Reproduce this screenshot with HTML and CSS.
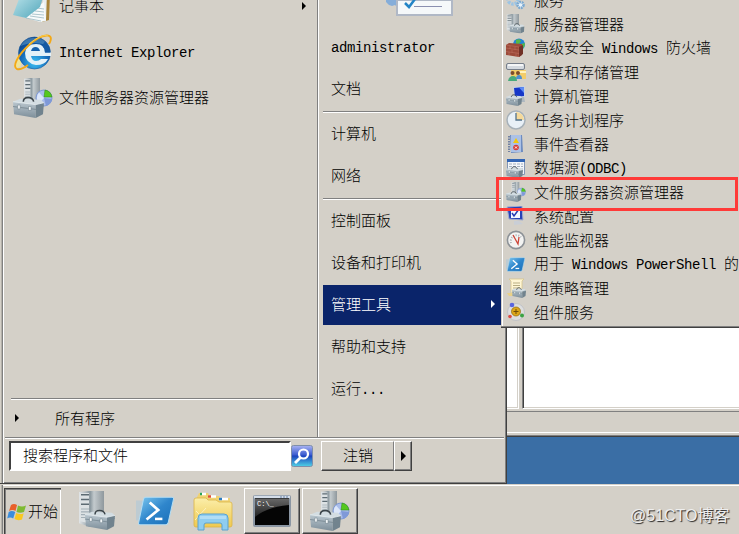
FILE: index.html
```
<!DOCTYPE html>
<html lang="zh-CN">
  <head>
    <meta charset="utf-8">
    <title>开始菜单</title>
    <link rel="stylesheet" href="styles.css">
  </head>
  <body>
    <!-- Shared icon shapes -->
    <svg class="defs" width="0" height="0">
      <defs>
        <linearGradient id="steel" x1="0" y1="0" x2="0" y2="1">
          <stop offset="0" stop-color="#b9c6ce"/><stop offset=".5" stop-color="#9cabb5"/><stop offset="1" stop-color="#7d8e99"/>
        </linearGradient>
        <linearGradient id="tower" x1="0" y1="0" x2="1" y2="0">
          <stop offset="0" stop-color="#e2e6e8"/><stop offset=".45" stop-color="#8b989f"/><stop offset=".6" stop-color="#c3cacd"/><stop offset="1" stop-color="#8f989d"/>
        </linearGradient>
        <linearGradient id="blue" x1="0" y1="0" x2="1" y2="1">
          <stop offset="0" stop-color="#7cc8f0"/><stop offset=".5" stop-color="#2f86cc"/><stop offset="1" stop-color="#1a6fb8"/>
        </linearGradient>
        <radialGradient id="globe" cx=".5" cy=".8" r=".75">
          <stop offset="0" stop-color="#3cc0f4"/><stop offset=".6" stop-color="#1468b8"/><stop offset="1" stop-color="#0b3d83"/>
        </radialGradient>
        <linearGradient id="folder" x1="0" y1="0" x2="0" y2="1">
          <stop offset="0" stop-color="#fbeeaa"/><stop offset="1" stop-color="#efc94f"/>
        </linearGradient>
        <linearGradient id="lens" x1="0" y1="0" x2="0" y2="1">
          <stop offset="0" stop-color="#a9b3f2"/><stop offset=".45" stop-color="#3a5bd0"/><stop offset=".5" stop-color="#1c43bd"/><stop offset="1" stop-color="#4fd3e6"/>
        </linearGradient>
        <linearGradient id="sheet" x1="0" y1="0" x2="1" y2="1">
          <stop offset="0" stop-color="#c5e9ef"/><stop offset="1" stop-color="#4ba3b8"/>
        </linearGradient>
        <linearGradient id="console" x1="0" y1="0" x2="0" y2="1">
          <stop offset="0" stop-color="#666"/><stop offset="1" stop-color="#222"/>
        </linearGradient>
        <symbol id="i-toolbox" viewBox="0 0 30 23" preserveAspectRatio="none">
          <path d="M0 6l7-3 20 1 3 3-7 3z" fill="#d3dde2"/>
          <path d="M0 6l22 3v14L1 19z" fill="url(#steel)"/>
          <path d="M22 9l8-2-1 12-7 4z" fill="#71838e"/>
          <path d="M0 11l22 3 8-4" fill="none" stroke="#74858f" stroke-width=".8"/>
          <path d="M0 6l22 3 8-2" fill="none" stroke="#e6edf0" stroke-width=".8"/>
          <path d="M10 6C10 0 19 0 20 6" fill="none" stroke="#3b4449" stroke-width="1.500"/>
          <path d="M4.500 9.500H7v4H4.500zM15 11h2.500v4H15z" fill="#f1f5f7" stroke="#687a84" stroke-width=".5"/>
        </symbol>
        <symbol id="i-tower" viewBox="0 0 25 38" preserveAspectRatio="none">
          <path d="M0 1l9-1h16v34l-14 4L0 34z" fill="url(#tower)"/>
          <path d="M1 2h9v32l-9-2z" fill="#dde2e4"/>
          <path d="M2 4h8M2 9h8M2 14h8" stroke="#5d6b73" stroke-width="1.600"/>
          <path d="M2 19h8M2 22h8M2 25h8M2 28h8" stroke="#a3afb6" stroke-width="1.200"/>
        </symbol>
        <symbol id="i-server" viewBox="0 0 38 40">
          <use href="#i-tower" x="0" y="0" width="25" height="36"/>
          <use href="#i-toolbox" x="6" y="18" width="30" height="21"/>
        </symbol>
        <symbol id="i-fsrm" viewBox="0 0 40 40">
          <use href="#i-tower" x="11" y="0" width="16" height="28"/>
          <circle cx="31" cy="20" r="8" fill="#a9bdea" stroke="#7f9ad4"/>
          <path d="M31 20l-5 5.500a8 8 0 0 1 0-11z" fill="#dce7fa"/>
          <path d="M31 20l2 8q5-2 6-7z" fill="#7f99d8"/>
          <path d="M31 19l1-7q6 1 7 7z" fill="#55c81e" stroke="#2a8b12" stroke-width=".5"/>
          <use href="#i-toolbox" x="0" y="18" width="31" height="22"/>
        </symbol>
        <symbol id="i-ps" viewBox="0 0 36 30">
          <path d="M0 5h8L4 24H0z" fill="#8fc3e655"/>
          <path d="M9 2h25q2 0 1.500 2l-5 22q-.5 2-2.500 2H4q-2 0-1.500-2L7 4q.5-2 2-2z" fill="url(#blue)" stroke="#b3dcf2"/>
          <path d="M13 7l8 7-11 9" fill="none" stroke="#fff" stroke-width="2.600"/>
          <path d="M18 22.500h7" stroke="#fff" stroke-width="2.400"/>
        </symbol>
      </defs>
    </svg>

    <div class="desktop">
      <!-- Window behind the menus -->
      <div class="window">
        <div class="panes">
          <div class="pane tree"></div>
          <div class="pane list"></div>
        </div>
        <div class="status"></div>
      </div>

      <!-- Start menu -->
      <div class="start-menu">
        <div class="columns">
          <div class="programs">
            <div class="program">
              <svg width="40" height="40" viewBox="0 0 40 40">
                <path d="M33 4l4 3-1 27-7 2z" fill="#a8843a"/>
                <path d="M31 4l3 2-1 29-6 1z" fill="#e8eef0"/>
                <path d="M10 31l17 5 6-2-2-18z" fill="#f7fafa"/>
                <path d="M17 30l14 2M19 28l12 1M22 25l9 1M24 22l7 1M13 32l15 3" stroke="#9bb9c2" stroke-width=".8"/>
                <path d="M9 5h23l-5 16-14 11L0 29z" fill="url(#sheet)"/>
              </svg>
              <span>记事本</span>
              <i class="arrow"></i>
            </div>
            <div class="program">
              <svg width="40" height="40" viewBox="0 0 40 40">
                <path d="M2 37C-1 26 12 12 25 5C14 17 7 27 8 34z" fill="#f4e88c" opacity=".8"/>
                <circle cx="21.500" cy="21" r="16" fill="url(#globe)" stroke="#155a9d" stroke-width=".6"/>
                <path d="M7.500 14a16 16 0 0 1 28 0q-14-6-28 0z" fill="#72b6e0" opacity=".45"/>
                <path d="M38 20.500v3.500H18q1 5 5 5 3 0 5-2h7q-3 6-12 6-11-2-11-12 1-9 11-9 9 0 9 8.500z" fill="#e4f1f8"/>
                <path d="M18 19h9q-1-4-4.500-4T18 19z" fill="#1560ab"/>
                <path d="M37 20.500a16 16 0 0 0-5-11l-3 4q3 3 3 7z" fill="#1459a3"/>
                <path d="M36 12c7-12-7-11-20 1C4 24-1 35 4 37c3 1 7-1 11-4" fill="none" stroke="#f3a817" stroke-width="1.900"/>
                <path d="M35 4c-4-2-12 2-19 8" fill="none" stroke="#fbd75b" stroke-width=".8"/>
              </svg>
              <span class="en">Internet Explorer</span>
            </div>
            <div class="program">
              <svg width="40" height="40"><use href="#i-fsrm"/></svg>
              <span>文件服务器资源管理器</span>
            </div>
            <div class="all-programs"><i class="arrow"></i><span>所有程序</span></div>
          </div>

          <div class="places">
            <div class="picture">
              <svg width="70" height="18" viewBox="0 0 70 18">
                <path d="M1 0h14v7h-3l-2-2-3 1-3-1-3-3z" fill="#85add9"/>
                <path d="M12 0h55v15H12z" fill="#f5f8fa" stroke="#b0b8c6" stroke-width="2"/>
                <path d="M20 3l4 4 6-8" fill="none" stroke="#2384c6" stroke-width="2.500"/>
                <path d="M29 6.500h28" stroke="#8a8fb0"/>
              </svg>
            </div>
            <div class="place"><span class="en">administrator</span></div>
            <div class="place">文档</div>
            <div class="sep"></div>
            <div class="place">计算机</div>
            <div class="place">网络</div>
            <div class="sep"></div>
            <div class="place">控制面板</div>
            <div class="place">设备和打印机</div>
            <div class="place active"><span>管理工具</span><i class="arrow"></i></div>
            <div class="place">帮助和支持</div>
            <div class="place">运行<span class="en">...</span></div>
          </div>
        </div>

        <div class="menu-foot">
          <div class="search">搜索程序和文件</div>
          <svg class="search-icon" width="22" height="22" viewBox="0 0 22 22">
            <rect x=".5" y=".5" width="21" height="21" rx="2" fill="url(#lens)" stroke="#7f8faa"/>
            <circle cx="12.500" cy="9" r="4.500" fill="none" stroke="#fff" stroke-width="2.200"/>
            <path d="M9.500 12.500L4 18" stroke="#fff" stroke-width="2.800"/>
          </svg>
          <div class="button logoff">注销</div>
          <div class="button more"><i class="arrow big"></i></div>
        </div>
      </div>

      <!-- Administrative tools submenu -->
      <div class="submenu">
        <div class="tool">
          <svg width="20" height="20" viewBox="0 0 20 20">
            <circle cx="7" cy="9" r="5" fill="none" stroke="#9cc4e4" stroke-width="3.500" stroke-dasharray="2.500 1"/>
            <circle cx="14.500" cy="15" r="3" fill="#e9f3fa" stroke="#7ca9d0" stroke-width="2.500" stroke-dasharray="1.800 .7"/>
          </svg>
          <span>服务</span>
        </div>
        <div class="tool">
          <svg width="20" height="20"><use href="#i-server"/></svg>
          <span>服务器管理器</span>
        </div>
        <div class="tool">
          <svg width="20" height="20" viewBox="0 0 20 20">
            <circle cx="13" cy="6.500" r="6" fill="#2384d4"/>
            <path d="M10 2q4-2 5 1l-2 3-3 1zM15 6l4-1q0 4-3 6z" fill="#53b848"/>
            <path d="M0 7l3-2 13 1v11l-3 2L0 17z" fill="#9c4a3a"/>
            <path d="M0 7l13 2v10M0 10l13 2M0 13.500l13 2M4 8v3M9 9v3M6 11.500v3M3 14v3M10 15.500v3" fill="none" stroke="#c07766" stroke-width=".5"/>
            <path d="M13 9l4-2v9l-4 3z" fill="#713127"/>
          </svg>
          <span>高级安全<span class="en"> Windows </span>防火墙</span>
        </div>
        <div class="tool">
          <svg width="20" height="20" viewBox="0 0 20 20">
            <path d="M5 8h15v9H5z" fill="#f3cd69"/>
            <path d="M13 9h7v2h-7z" fill="#fff3bd"/>
            <rect x=".5" y="1.500" width="18" height="6" rx="1.500" fill="#d5dae0" stroke="#777f8b"/>
            <path d="M2 3h15" stroke="#fff" stroke-width="1.500"/>
            <circle cx="6.500" cy="11" r="2" fill="#7d4c2c"/><circle cx="12" cy="11" r="2" fill="#7d4c2c"/>
            <path d="M2 19q1-5 5-5t4 5z" fill="#49aa7c"/><path d="M10 17q0-4 3-4t3 4z" fill="#4d8fd0"/>
          </svg>
          <span>共享和存储管理</span>
        </div>
        <div class="tool">
          <svg width="20" height="20" viewBox="0 0 20 20">
            <path d="M7 1l12-1v11l-11 1z" fill="#c8d3e2"/>
            <path d="M8 2l10-1v9L9 11z" fill="#1637c8"/><path d="M13 1.500l5-.5v6z" fill="#5f8df4"/>
            <path d="M10 12l8-1 1 5h-7z" fill="#aeb8c0"/>
            <use href="#i-toolbox" x="0" y="8" width="16" height="12"/>
          </svg>
          <span>计算机管理</span>
        </div>
        <div class="tool">
          <svg width="20" height="20" viewBox="0 0 20 20">
            <circle cx="10" cy="10" r="9" fill="#e8f0f7" stroke="#a7b1b9" stroke-width="1.500"/>
            <path d="M10 10V2a8 8 0 0 1 8 8z" fill="#f5d99a"/>
            <path d="M10 3v7h6" fill="none" stroke="#52718c" stroke-width="1.300"/>
          </svg>
          <span>任务计划程序</span>
        </div>
        <div class="tool">
          <svg width="20" height="20" viewBox="0 0 20 20">
            <path d="M4 1h12l1 17-12 1z" fill="#6e8cc0"/>
            <path d="M5 1h10v17H5z" fill="#abc1e6"/>
            <path d="M3 2v16" stroke="#7382a2" stroke-width="2" stroke-dasharray="1.500 1"/>
            <path d="M10 4l3 5H7z" fill="#f2c70c"/>
            <circle cx="10" cy="13.500" r="2.800" fill="#d83a34"/>
            <path d="M9 12.500l2 2m0-2l-2 2" stroke="#fff"/>
          </svg>
          <span>事件查看器</span>
        </div>
        <div class="tool">
          <svg width="20" height="20" viewBox="0 0 20 20">
            <path d="M1.500 1.500h17v15h-17z" fill="#f3f6fa" stroke="#8296b5"/>
            <path d="M1 1h18v3H1z" fill="#3265b4"/>
            <path d="M3 6h14M3 8.500h14M14 11h3" stroke="#a2aebe" stroke-dasharray="3 1"/>
            <use href="#i-toolbox" x="0" y="8" width="17" height="12"/>
          </svg>
          <span>数据源<span class="en">(ODBC)</span></span>
        </div>
        <div class="tool">
          <svg width="20" height="20"><use href="#i-fsrm"/></svg>
          <span>文件服务器资源管理器</span>
        </div>
        <div class="tool">
          <svg width="20" height="20" viewBox="0 0 20 20">
            <path d="M1 1l15-1 1 14-14-1z" fill="#2742b6" stroke="#a2add2"/>
            <path d="M5 2h9v10H5z" fill="#f4f7ff"/>
            <path d="M6 7l2 3 5-7" fill="none" stroke="#253bb3" stroke-width="1.500"/>
            <path d="M8 15h5l4 3-9 1z" fill="#c9ced6"/>
          </svg>
          <span>系统配置</span>
        </div>
        <div class="tool">
          <svg width="20" height="20" viewBox="0 0 20 20">
            <circle cx="10" cy="10" r="8.600" fill="#f3f3f2" stroke="#8d9297" stroke-width="1.600"/>
            <path d="M5 13a6 6 0 0 1 10-6" fill="none" stroke="#a9afb3" stroke-dasharray="1 1.500" stroke-width="2"/>
            <path d="M7 5l5 9 1-7" fill="none" stroke="#cc4438" stroke-width="1.300"/>
          </svg>
          <span>性能监视器</span>
        </div>
        <div class="tool">
          <svg width="20" height="20"><use href="#i-ps" width="19" height="19" y="1"/></svg>
          <span>用于<span class="en"> Windows PowerShell </span>的</span>
        </div>
        <div class="tool">
          <svg width="20" height="20" viewBox="0 0 20 20">
            <path d="M3 1h15l-2 2v12H5V3z" fill="#fff6d4" stroke="#d7c58c" stroke-width=".8"/>
            <path d="M7 5h7M7 7.500h7M7 10h7" stroke="#b8ad83"/>
            <path d="M1 15h8v3H3z" fill="#ead188"/>
            <use href="#i-toolbox" x="6" y="9" width="14" height="11"/>
          </svg>
          <span>组策略管理</span>
        </div>
        <div class="tool">
          <svg width="20" height="20" viewBox="0 0 20 20">
            <circle cx="10" cy="10" r="8.500" fill="#dddedf" stroke="#c1c3c7"/>
            <circle cx="10" cy="9.500" r="4.500" fill="#dca619" stroke="#91670c" stroke-width=".7"/>
            <path d="M10 7v5M7.500 9.500h5" stroke="#6e4d0a"/>
            <circle cx="6" cy="3" r="2.300" fill="#5965df"/><circle cx="4" cy="14.500" r="1.800" fill="#de4b44"/><circle cx="16" cy="13.500" r="2" fill="#3ba342"/>
          </svg>
          <span>组件服务</span>
        </div>
      </div>
      <div class="highlight"></div>

      <!-- Taskbar -->
      <div class="taskbar">
        <div class="start">
          <svg width="20" height="20" viewBox="0 0 20 20">
            <path d="M4 3q3-2 6 0L8.500 9q-3-2-6.500 0z" fill="#e8602a"/>
            <path d="M11 3.500q4 2 8 0L17 10q-4 1.500-7.500 0z" fill="#7fba32"/>
            <path d="M1.700 10q3-2 6.500 0l-2 6.500q-3-2-6 0z" fill="#3c8ddc"/>
            <path d="M9.200 11q4 2 7.500.200L15 17.500q-4 1.500-7.500-.5z" fill="#f9c820"/>
          </svg>
          <span>开始</span>
        </div>
        <div class="launch">
          <svg width="38" height="40"><use href="#i-server"/></svg>
          <svg width="38" height="32"><use href="#i-ps"/></svg>
          <svg width="40" height="40" viewBox="0 0 40 40">
            <path d="M4 6l2-4h9l2 3h9l2 2h9v22H4z" fill="#efd272"/>
            <path d="M7 3h6M15 5.500h8M26 8h9" stroke="#fff" stroke-width="2.500"/>
            <path d="M7 3h2" stroke="#26a458" stroke-width="2.500"/><path d="M15 5.500h3" stroke="#df5033" stroke-width="2.500"/><path d="M26 8h3" stroke="#2b7cc3" stroke-width="2.500"/>
            <path d="M1 9q0-2 2-2h10l2 2h8l3 2h11q2 0 2 2v21q0 2-2 2H3q-2 0-2-2z" fill="url(#folder)" stroke="#dab446" stroke-width=".8"/>
            <path d="M2 29L13 17M3 20l10 10" stroke="#fff9d8" opacity=".7"/>
            <path d="M5 39V27q0-4 4-4h22q4 0 4 4v12h-6v-5q0-2-2-2H13q-2 0-2 2v5z" fill="#8fcdf0" stroke="#5aa2cf"/>
            <path d="M7 25h26v3H7z" fill="#c8e8f8" opacity=".6"/>
          </svg>
        </div>
        <div class="task">
          <svg width="38" height="32" viewBox="0 0 38 32">
            <rect x="1" y="1" width="36" height="30" rx="1" fill="#050505" stroke="#8b96a3" stroke-width="2"/>
            <path d="M1 2h36" stroke="#d4dde8" stroke-width="2.500"/>
            <path d="M27 2h8" stroke="#6680a7" stroke-dasharray="2 1"/>
            <path d="M2 4h34v6Q14 12 2 22z" fill="url(#console)"/>
            <text class="prompt" x="4" y="11">C:\_</text>
          </svg>
        </div>
        <div class="task"><svg width="40" height="40"><use href="#i-fsrm"/></svg></div>
      </div>
      <div class="watermark">@51CTO博客</div>
    </div>
  </body>
</html>
```
FILE: styles.css
```
body {
  margin: 0;
  overflow: hidden;
  background: #3a6ea5;
  color: #000;
  font: 300 15px/20px "Noto Sans CJK SC", sans-serif;
}

svg {
  display: block;
  flex: none;
}

.defs {
  position: absolute;
}

.en {
  font-family: "Liberation Mono", monospace;
  font-size: 14px;
  font-weight: 400;
  letter-spacing: -0.4px;
  white-space: pre;
}

.desktop {
  position: relative;
  display: flex;
  flex-direction: column;
  width: 739px;
  height: 534px;
  overflow: hidden;
}

/* Window behind the menus */
.window {
  box-sizing: border-box;
  height: 437px;
  padding-bottom: 2px;
  background: #d4d0c8;
  border-bottom: 1px solid #404040;
  box-shadow: inset 0 -1px #808080;
}

.panes {
  display: flex;
  gap: 3px;
  height: 409px;
}

.pane {
  box-sizing: border-box;
  background: #fff;
  border-bottom: 1px solid #fff;
}

.tree {
  width: 519px;
  border-right: 1px solid #fff;
  box-shadow: inset -1px -1px #d4d0c8;
}

.list {
  flex: 1;
  border-left: 1px solid #808080;
  box-shadow: inset 1px 0 #404040, inset 0 -1px #d4d0c8;
}

.status {
  height: 20px;
  margin-top: 2px;
  border-top: 1px solid #808080;
  border-bottom: 1px solid #fff;
}

/* Start menu */
.start-menu {
  position: absolute;
  left: 0;
  top: 0;
  box-sizing: border-box;
  width: 507px;
  height: 484px;
  padding: 0 2px 0 3px;
  background: #d4d0c8;
  border-right: 1px solid #404040;
  border-bottom: 1px solid #404040;
  box-shadow: inset 1px 0 #d4d0c8, inset 2px 0 #b4b1aa, inset 3px 0 #808080, inset 4px 0 #fff, inset -1px -1px #808080;
}

.columns {
  display: flex;
  height: 437px;
  margin-left: 2px;
  border-bottom: 1px solid #808080;
  box-shadow: 0 1px #fff;
}

.programs {
  display: flex;
  flex-direction: column;
  box-sizing: border-box;
  width: 313px;
  padding: 0 4px 0 6px;
  border-right: 1px solid #808080;
}

.program {
  display: flex;
  align-items: center;
  flex: none;
  gap: 6px;
  height: 40px;
  margin: 0 8px 6px 2px;
}

.program:first-child {
  margin-top: -14px;
}

.program span {
  padding-bottom: 2px;
}

.program .en {
  padding: 2px 0 0;
}

.program .arrow {
  margin: 0 -1px 0 auto;
}

.all-programs {
  display: flex;
  align-items: center;
  gap: 36px;
  height: 38px;
  margin-top: auto;
  padding-left: 4px;
  border-top: 1px solid #808080;
  box-shadow: inset 0 1px #fff;
}

.arrow {
  width: 0;
  height: 0;
  border: 4px solid transparent;
  border-left-color: currentColor;
  border-right-width: 0;
}

.arrow.big {
  border-width: 5px 0 5px 5px;
}

.places {
  display: flex;
  flex-direction: column;
  flex: 1;
  padding-left: 4px;
  border-left: 1px solid #fff;
}

.picture {
  height: 25px;
  padding-left: 62px;
}

.place {
  display: flex;
  align-items: center;
  box-sizing: border-box;
  width: 178px;
  height: 40px;
  margin-top: 2px;
  padding: 0 6px 2px 8px;
}

.place.active {
  justify-content: space-between;
  background: #0a246a;
  color: #fff;
}

.place > .en {
  padding-top: 3px;
}

.sep {
  width: 178px;
  height: 1px;
  margin: 2px 0 -1px;
  background: #fff;
  border-top: 1px solid #808080;
}

.menu-foot {
  display: flex;
  align-items: center;
  height: 29px;
  margin: 3px 0 0 6px;
}

.search {
  box-sizing: border-box;
  width: 282px;
  height: 30px;
  padding-left: 12px;
  background: #fff;
  border: 2px solid;
  border-color: #404040 #fff #fff #404040;
  line-height: 24px;
}

.search-icon {
  margin-right: 8px;
}

.button {
  display: flex;
  align-items: center;
  justify-content: center;
  box-sizing: border-box;
  height: 30px;
  border: 1px solid;
  border-color: #fff #404040 #404040 #fff;
  box-shadow: inset -1px -1px #808080;
}

.logoff {
  width: 73px;
  padding: 0 0 2px 1px;
  border-right-color: #808080;
  box-shadow: inset 0 -1px #808080;
}

.more {
  width: 18px;
}

/* Administrative tools submenu */
.submenu {
  position: absolute;
  left: 501px;
  top: -12px;
  width: 260px;
  padding: 0 0 3px 5px;
  background: #d4d0c8;
  border-bottom: 1px solid #404040;
  box-shadow: inset 0 -1px #808080, inset 1px 0 #d4d0c8, inset 2px 0 #fff;
}

.tool {
  display: flex;
  align-items: center;
  gap: 8px;
  height: 24px;
  white-space: nowrap;
}

.highlight {
  position: absolute;
  left: 496px;
  top: 177px;
  width: 236px;
  height: 28px;
  border: 3px solid #ff3a38;
}

/* Taskbar */
.taskbar {
  display: flex;
  box-sizing: border-box;
  height: 50px;
  margin-top: auto;
  padding: 3px 0 0 4px;
  background: #d4d0c8;
  border-top: 1px solid #d4d0c8;
  box-shadow: inset 1px 0 #d4d0c8, inset 2px 0 #b4b1aa, inset 3px 0 #808080, inset 0 1px #fff;
  z-index: 1;
}

.start {
  display: flex;
  align-items: center;
  box-sizing: border-box;
  width: 57px;
  padding-left: 2px;
  border: 1px solid #404040;
  border-width: 1px 0 0 1px;
  box-shadow: inset 1px 1px #808080, inset -1px 0 #fff;
  white-space: nowrap;
}

.start span {
  margin-left: 1px;
  padding-bottom: 2px;
}

.launch {
  display: flex;
  align-items: center;
  gap: 19px;
  margin: 0 10px 0 18px;
}

.task {
  display: flex;
  align-items: center;
  justify-content: center;
  box-sizing: border-box;
  width: 56px;
  height: 46px;
  margin: 0 1px;
  border: 1px solid;
  border-color: #fff #404040 #404040 #fff;
  box-shadow: inset -1px -1px #808080;
}

.prompt {
  fill: #fff;
  font: 7px "Liberation Mono", monospace;
}

.watermark {
  position: absolute;
  left: 630px;
  top: 505px;
  z-index: 2;
  color: #eee;
  font: 400 16px/22px "Liberation Sans", "Noto Sans CJK SC", sans-serif;
  text-shadow: 1px 1px 1px #222;
}
```
